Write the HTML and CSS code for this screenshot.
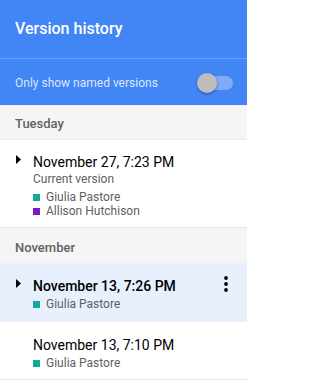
FILE: index.html
```html
<!DOCTYPE html>
<html>
<head>
<meta charset="utf-8">
<link rel="stylesheet" href="styles.css">
</head>
<body>
<div class="panel">
  <header class="top">
    <div class="title">Version history</div>
    <div class="filter">
      <span class="filter-label">Only show named versions</span>
      <span class="toggle"><span class="knob"></span></span>
    </div>
  </header>

  <div class="day">Tuesday</div>
  <div class="item first">
    <div class="gutter"><svg class="caret" width="5" height="9" viewBox="0 0 5 9"><polygon points="0,0 5,4.5 0,9" fill="#000"/></svg></div>
    <div class="body">
      <div class="when">November 27, 7:23 PM</div>
      <div class="sub">Current version</div>
      <ul class="users">
        <li><span class="sq teal"></span>Giulia Pastore</li>
        <li><span class="sq purple"></span>Allison Hutchison</li>
      </ul>
    </div>
  </div>

  <div class="day">November</div>
  <div class="item selected">
    <div class="gutter"><svg class="caret" width="5" height="9" viewBox="0 0 5 9"><polygon points="0,0 5,4.5 0,9" fill="#000"/></svg></div>
    <div class="body">
      <div class="when bold">November 13, 7:26 PM</div>
      <ul class="users">
        <li><span class="sq teal"></span>Giulia Pastore</li>
      </ul>
    </div>
    <svg class="kebab" width="4" height="16" viewBox="0 0 4 16"><circle cx="2" cy="2" r="1.9" fill="#000"/><circle cx="2" cy="8" r="1.9" fill="#000"/><circle cx="2" cy="14" r="1.9" fill="#000"/></svg>
  </div>
  <div class="item">
    <div class="gutter"></div>
    <div class="body">
      <div class="when">November 13, 7:10 PM</div>
      <ul class="users">
        <li><span class="sq teal"></span>Giulia Pastore</li>
      </ul>
    </div>
  </div>
</div>
</body>
</html>
```
FILE: styles.css
```css
html, body {
  margin: 0;
  padding: 0;
  background: #ffffff;
}
body {
  font-family: Roboto, "Liberation Sans", Arial, sans-serif;
  width: 247px;
  overflow: hidden;
}
.panel {
  display: flex;
  flex-direction: column;
}
.top {
  background: #4285f4;
  color: #fff;
}
.title {
  height: 59px;
  box-sizing: border-box;
  padding: 19px 15px 0;
  font-size: 16px;
  line-height: 20px;
  font-weight: 500;
  border-bottom: 1px solid rgba(255, 255, 255, 0.22);
}
.filter {
  height: 44px;
  padding: 2px 14px 0 15px;
  display: flex;
  align-items: center;
  justify-content: space-between;
}
.filter-label {
  font-size: 12px;
  line-height: 15px;
  color: rgba(255, 255, 255, 0.82);
}
.toggle {
  position: relative;
  width: 35px;
  height: 14px;
  border-radius: 7px;
  background: rgba(255, 255, 255, 0.32);
}
.knob {
  position: absolute;
  left: -1px;
  top: -3px;
  width: 20px;
  height: 20px;
  border-radius: 50%;
  background: #bdbdbd;
  box-shadow: 0 1px 3px rgba(0, 0, 0, 0.35);
}
.day {
  background: #f5f5f5;
  padding: 12px 15px 8px;
  font-size: 13px;
  line-height: 15px;
  font-weight: 500;
  color: #616161;
}
.day:first-of-type {
  padding: 11px 15px 8px;
}
.item {
  display: flex;
  align-items: flex-start;
  padding: 14px 0 9px;
  border-bottom: 1px solid #e8e8e8;
  background: #fff;
}
.item.first {
  border-top: 1px solid #ededed;
  padding-top: 13px;
}
.item.selected {
  padding-bottom: 10px;
  background: #e8f0fe;
  border-bottom-color: #e8f0fe;
}
.gutter {
  width: 33px;
  flex: 0 0 33px;
}
.caret {
  display: block;
  margin: 2px 0 0 16px;
}
.body {
  flex: 1;
}
.when {
  font-size: 14px;
  line-height: 18px;
  color: #000;
}
.when.bold {
  font-weight: 500;
}
.sub {
  font-size: 12px;
  line-height: 17px;
  color: #616161;
}
.users {
  list-style: none;
  margin: 2px 0 0;
  padding: 0;
}
.users li {
  display: flex;
  align-items: center;
  font-size: 12px;
  line-height: 14px;
  color: #616161;
}
.sq {
  width: 7px;
  height: 7px;
  margin: 1px 6px 0 0;
}
.teal { background: #14a898; }
.purple { background: #7b18c2; }
.kebab {
  display: block;
  margin: -1px 19px 0 0;
}
```
